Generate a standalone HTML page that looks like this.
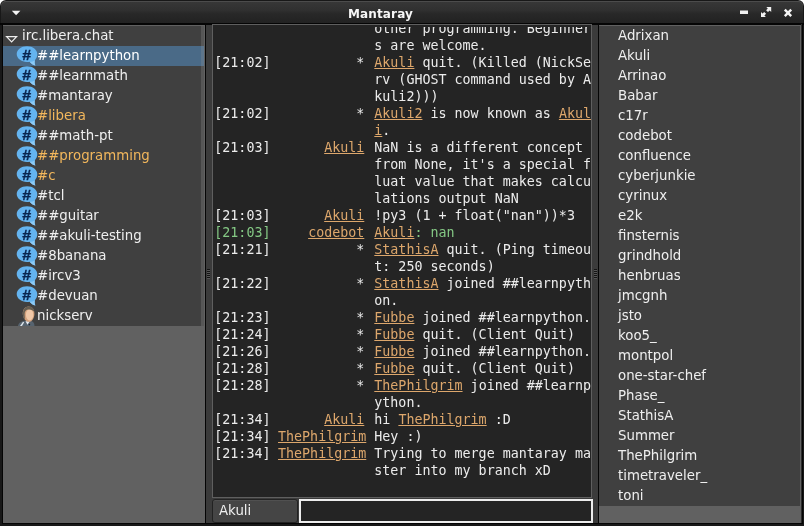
<!DOCTYPE html>
<html><head><meta charset="utf-8"><title>Mantaray</title>
<style>
html,body{margin:0;padding:0;}
body{width:804px;height:526px;overflow:hidden;background:#fff;font-family:"DejaVu Sans","Liberation Sans",sans-serif;position:relative;}
#win{will-change:transform;position:absolute;left:0;top:0;width:804px;height:526px;background:#181818;border-radius:6px 6px 0 0;overflow:hidden;}
#inner{position:absolute;left:3px;top:23px;width:798px;height:500px;background:#3b3b3b;}
.bl{position:absolute;background:#050505;}
#title{position:absolute;left:1px;top:1px;width:802px;height:22px;background:linear-gradient(#383838 0%,#303030 42%,#282828 58%,#222 100%);border-radius:5px 5px 0 0;box-shadow:inset 0 1px 0 #4c4c4c;}
#title .t{position:absolute;left:0;width:759px;letter-spacing:0.14px;top:5px;text-align:center;color:#f6f6f6;font-weight:bold;font-size:12px;line-height:16px;}
#left{position:absolute;left:3px;top:25px;width:202px;height:498px;background:#616161;}
#left .rows{position:absolute;left:0;top:1px;width:201px;background:#404040;}
.row{height:20px;line-height:20px;font-size:13.33px;color:#efefef;white-space:nowrap;position:relative;}
.row.sel{background:#4a6a87;color:#fff;}
.row.hl{color:#f2b75c;}
.row .ic{position:absolute;left:13px;top:0;}
.row .tx{position:absolute;left:34px;top:0;}
.row.top .tx{left:19px;}
#mid{position:absolute;left:212px;top:24px;width:380px;height:474px;background:#242424;box-sizing:border-box;border:1px solid #5f5f5f;overflow:hidden;}
#clip{position:absolute;left:0;top:2px;right:0;bottom:2px;overflow:hidden;}
#chat{position:absolute;left:1.3px;top:-7px;width:376px;font-family:"DejaVu Sans Mono","Liberation Mono",monospace;font-size:13.33px;line-height:17px;color:#ececec;white-space:nowrap;}
#chat .l{height:17px;position:relative;}
#chat .l.g{color:#84c884;}
#chat span{white-space:pre;}
#chat .tm{position:absolute;left:0;}
#chat .sd{position:absolute;left:0;width:152px;text-align:right;box-sizing:border-box;}
#chat .ms{position:absolute;left:160px;}
.n{color:#dda76c;text-decoration:underline;text-decoration-thickness:1px;text-underline-offset:1px;}
#nick{position:absolute;left:212px;top:499px;width:86px;height:24px;background:#454545;color:#efefef;font-size:13.33px;line-height:22px;box-sizing:border-box;border:1px solid #222;border-radius:3px;box-shadow:inset 0 1px 0 #505050;}
#nick span{position:absolute;left:6px;top:0;}
#entry{position:absolute;left:299px;top:499px;width:294px;height:24px;background:#242424;box-sizing:border-box;border:2px solid #ededed;}
#right{position:absolute;left:599px;top:25px;width:202px;height:498px;background:#616161;}
#right .rows{position:absolute;left:0;top:1px;width:201px;background:#404040;}
#right .row .tx{left:19px;}
.grip{position:absolute;}
</style></head><body><div id="win">
<div id="inner"></div>
<div id="title"><div class="t">Mantaray</div>
<svg style="position:absolute;left:-1px;top:-1px" width="804" height="23">
<path d="M11.800 10.800 L20.400 10.800 L16.100 15.200 Z" fill="#f4f4f4"/>
<rect x="740" y="10.500" width="8" height="3.500" fill="#f0f0f0"/>
<g fill="#f2f2f2"><path d="M766.300 7 L771.200 7 L771.200 11.900 L769.700 10.400 L768 12.100 L766.100 10.200 L767.800 8.500 Z"/><path d="M761 17 L761 12.100 L762.500 13.600 L764.200 11.900 L766.100 13.800 L764.400 15.500 L765.900 17 Z"/></g>
<path d="M784.800 9.700 L791.200 16.100 M791.200 9.700 L784.800 16.100" stroke="#f4f4f4" stroke-width="2.400" fill="none"/>
</svg>
</div>
<div class="bl" style="left:0;top:23px;width:804px;height:1px"></div>
<div class="bl" style="left:0;top:24px;width:212px;height:1px"></div>
<div class="bl" style="left:592px;top:24px;width:212px;height:1px"></div>
<div class="bl" style="left:205px;top:24px;width:1px;height:499px"></div>
<div class="bl" style="left:598px;top:24px;width:1px;height:499px"></div>
<div class="bl" style="left:2px;top:23px;width:1px;height:501px"></div>
<div class="bl" style="left:2px;top:523px;width:800px;height:1px"></div>
<div class="bl" style="left:802px;top:23px;width:1px;height:501px"></div>
<div class="bl" style="left:801px;top:24px;width:1px;height:499px;background:#2c2c2c"></div>

<div id="left"><div class="rows">
<div class="row top"><svg style="position:absolute;left:2px;top:0" width="16" height="20"><path d="M1.600 10.600 L11.600 10.600 L6.600 15.800 Z" fill="none" stroke="#efefef" stroke-width="1.200"/></svg><span class="tx">irc.libera.chat</span></div>
<div class="row sel"><svg class="ic" width="24" height="20" viewBox="0 0 24 20"><path d="M11 0.2 C5.2 0.2 0.7 3.7 0.7 8.1 C0.7 12.5 5.2 16 11 16 C11.9 16 12.8 15.9 13.6 15.7 C15.2 17.6 17 19 19.4 19.4 C18.6 18 18.4 16.200 18.900 14.200 C20.4 12.600 21.300 10.600 21.300 8.100 C21.300 3.700 16.800 0.200 11 0.200 Z" fill="#64b4f0"/><path d="M13.600 15.700 C15.200 17.600 17 19 19.400 19.400 C18.600 18 18.400 16.200 18.900 14.200 C17.500 15.200 15.700 15.700 13.600 15.700 Z" fill="#8ccaf6"/><text x="10" y="13.200" transform="scale(1.07,1.03)" text-anchor="middle" font-family="Liberation Sans, DejaVu Sans, sans-serif" font-weight="bold" font-size="15" fill="#0a2650" stroke="#0a2650" stroke-width="0.350">#</text></svg><span class="tx">##learnpython</span></div>
<div class="row "><svg class="ic" width="24" height="20" viewBox="0 0 24 20"><path d="M11 0.2 C5.2 0.2 0.7 3.7 0.7 8.1 C0.7 12.5 5.2 16 11 16 C11.9 16 12.8 15.9 13.6 15.7 C15.2 17.6 17 19 19.4 19.4 C18.6 18 18.4 16.200 18.900 14.200 C20.4 12.600 21.300 10.600 21.300 8.100 C21.300 3.700 16.800 0.200 11 0.200 Z" fill="#64b4f0"/><path d="M13.600 15.700 C15.200 17.600 17 19 19.400 19.400 C18.600 18 18.400 16.200 18.900 14.200 C17.500 15.200 15.700 15.700 13.600 15.700 Z" fill="#8ccaf6"/><text x="10" y="13.200" transform="scale(1.07,1.03)" text-anchor="middle" font-family="Liberation Sans, DejaVu Sans, sans-serif" font-weight="bold" font-size="15" fill="#0a2650" stroke="#0a2650" stroke-width="0.350">#</text></svg><span class="tx">##learnmath</span></div>
<div class="row "><svg class="ic" width="24" height="20" viewBox="0 0 24 20"><path d="M11 0.2 C5.2 0.2 0.7 3.7 0.7 8.1 C0.7 12.5 5.2 16 11 16 C11.9 16 12.8 15.9 13.6 15.7 C15.2 17.6 17 19 19.4 19.4 C18.6 18 18.4 16.200 18.900 14.200 C20.4 12.600 21.300 10.600 21.300 8.100 C21.300 3.700 16.800 0.200 11 0.200 Z" fill="#64b4f0"/><path d="M13.600 15.700 C15.200 17.600 17 19 19.400 19.400 C18.600 18 18.400 16.200 18.900 14.200 C17.500 15.200 15.700 15.700 13.600 15.700 Z" fill="#8ccaf6"/><text x="10" y="13.200" transform="scale(1.07,1.03)" text-anchor="middle" font-family="Liberation Sans, DejaVu Sans, sans-serif" font-weight="bold" font-size="15" fill="#0a2650" stroke="#0a2650" stroke-width="0.350">#</text></svg><span class="tx">#mantaray</span></div>
<div class="row hl"><svg class="ic" width="24" height="20" viewBox="0 0 24 20"><path d="M11 0.2 C5.2 0.2 0.7 3.7 0.7 8.1 C0.7 12.5 5.2 16 11 16 C11.9 16 12.8 15.9 13.6 15.7 C15.2 17.6 17 19 19.4 19.4 C18.6 18 18.4 16.200 18.900 14.200 C20.4 12.600 21.300 10.600 21.300 8.100 C21.300 3.700 16.800 0.200 11 0.200 Z" fill="#64b4f0"/><path d="M13.600 15.700 C15.200 17.600 17 19 19.400 19.400 C18.600 18 18.400 16.200 18.900 14.200 C17.500 15.200 15.700 15.700 13.600 15.700 Z" fill="#8ccaf6"/><text x="10" y="13.200" transform="scale(1.07,1.03)" text-anchor="middle" font-family="Liberation Sans, DejaVu Sans, sans-serif" font-weight="bold" font-size="15" fill="#0a2650" stroke="#0a2650" stroke-width="0.350">#</text></svg><span class="tx">#libera</span></div>
<div class="row "><svg class="ic" width="24" height="20" viewBox="0 0 24 20"><path d="M11 0.2 C5.2 0.2 0.7 3.7 0.7 8.1 C0.7 12.5 5.2 16 11 16 C11.9 16 12.8 15.9 13.6 15.7 C15.2 17.6 17 19 19.4 19.4 C18.6 18 18.4 16.200 18.900 14.200 C20.4 12.600 21.300 10.600 21.300 8.100 C21.300 3.700 16.800 0.200 11 0.200 Z" fill="#64b4f0"/><path d="M13.600 15.700 C15.200 17.600 17 19 19.400 19.400 C18.600 18 18.400 16.200 18.900 14.200 C17.500 15.200 15.700 15.700 13.600 15.700 Z" fill="#8ccaf6"/><text x="10" y="13.200" transform="scale(1.07,1.03)" text-anchor="middle" font-family="Liberation Sans, DejaVu Sans, sans-serif" font-weight="bold" font-size="15" fill="#0a2650" stroke="#0a2650" stroke-width="0.350">#</text></svg><span class="tx">##math-pt</span></div>
<div class="row hl"><svg class="ic" width="24" height="20" viewBox="0 0 24 20"><path d="M11 0.2 C5.2 0.2 0.7 3.7 0.7 8.1 C0.7 12.5 5.2 16 11 16 C11.9 16 12.8 15.9 13.6 15.7 C15.2 17.6 17 19 19.4 19.4 C18.6 18 18.4 16.200 18.900 14.200 C20.4 12.600 21.300 10.600 21.300 8.100 C21.300 3.700 16.800 0.200 11 0.200 Z" fill="#64b4f0"/><path d="M13.600 15.700 C15.200 17.600 17 19 19.400 19.400 C18.600 18 18.400 16.200 18.900 14.200 C17.500 15.200 15.700 15.700 13.600 15.700 Z" fill="#8ccaf6"/><text x="10" y="13.200" transform="scale(1.07,1.03)" text-anchor="middle" font-family="Liberation Sans, DejaVu Sans, sans-serif" font-weight="bold" font-size="15" fill="#0a2650" stroke="#0a2650" stroke-width="0.350">#</text></svg><span class="tx">##programming</span></div>
<div class="row hl"><svg class="ic" width="24" height="20" viewBox="0 0 24 20"><path d="M11 0.2 C5.2 0.2 0.7 3.7 0.7 8.1 C0.7 12.5 5.2 16 11 16 C11.9 16 12.8 15.9 13.6 15.7 C15.2 17.6 17 19 19.4 19.4 C18.6 18 18.4 16.200 18.900 14.200 C20.4 12.600 21.300 10.600 21.300 8.100 C21.300 3.700 16.800 0.200 11 0.200 Z" fill="#64b4f0"/><path d="M13.600 15.700 C15.200 17.600 17 19 19.400 19.400 C18.600 18 18.400 16.200 18.900 14.200 C17.500 15.200 15.700 15.700 13.600 15.700 Z" fill="#8ccaf6"/><text x="10" y="13.200" transform="scale(1.07,1.03)" text-anchor="middle" font-family="Liberation Sans, DejaVu Sans, sans-serif" font-weight="bold" font-size="15" fill="#0a2650" stroke="#0a2650" stroke-width="0.350">#</text></svg><span class="tx">#c</span></div>
<div class="row "><svg class="ic" width="24" height="20" viewBox="0 0 24 20"><path d="M11 0.2 C5.2 0.2 0.7 3.7 0.7 8.1 C0.7 12.5 5.2 16 11 16 C11.9 16 12.8 15.9 13.6 15.7 C15.2 17.6 17 19 19.4 19.4 C18.6 18 18.4 16.200 18.900 14.200 C20.4 12.600 21.300 10.600 21.300 8.100 C21.300 3.700 16.800 0.200 11 0.200 Z" fill="#64b4f0"/><path d="M13.600 15.700 C15.200 17.600 17 19 19.400 19.400 C18.600 18 18.400 16.200 18.900 14.200 C17.500 15.200 15.700 15.700 13.600 15.700 Z" fill="#8ccaf6"/><text x="10" y="13.200" transform="scale(1.07,1.03)" text-anchor="middle" font-family="Liberation Sans, DejaVu Sans, sans-serif" font-weight="bold" font-size="15" fill="#0a2650" stroke="#0a2650" stroke-width="0.350">#</text></svg><span class="tx">#tcl</span></div>
<div class="row "><svg class="ic" width="24" height="20" viewBox="0 0 24 20"><path d="M11 0.2 C5.2 0.2 0.7 3.7 0.7 8.1 C0.7 12.5 5.2 16 11 16 C11.9 16 12.8 15.9 13.6 15.7 C15.2 17.6 17 19 19.4 19.4 C18.6 18 18.4 16.200 18.900 14.200 C20.4 12.600 21.300 10.600 21.300 8.100 C21.300 3.700 16.800 0.200 11 0.200 Z" fill="#64b4f0"/><path d="M13.600 15.700 C15.200 17.600 17 19 19.400 19.400 C18.600 18 18.400 16.200 18.900 14.200 C17.500 15.200 15.700 15.700 13.600 15.700 Z" fill="#8ccaf6"/><text x="10" y="13.200" transform="scale(1.07,1.03)" text-anchor="middle" font-family="Liberation Sans, DejaVu Sans, sans-serif" font-weight="bold" font-size="15" fill="#0a2650" stroke="#0a2650" stroke-width="0.350">#</text></svg><span class="tx">##guitar</span></div>
<div class="row "><svg class="ic" width="24" height="20" viewBox="0 0 24 20"><path d="M11 0.2 C5.2 0.2 0.7 3.7 0.7 8.1 C0.7 12.5 5.2 16 11 16 C11.9 16 12.8 15.9 13.6 15.7 C15.2 17.6 17 19 19.4 19.4 C18.6 18 18.4 16.200 18.900 14.200 C20.4 12.600 21.300 10.600 21.300 8.100 C21.300 3.700 16.800 0.200 11 0.200 Z" fill="#64b4f0"/><path d="M13.600 15.700 C15.200 17.600 17 19 19.400 19.400 C18.600 18 18.400 16.200 18.900 14.200 C17.500 15.200 15.700 15.700 13.600 15.700 Z" fill="#8ccaf6"/><text x="10" y="13.200" transform="scale(1.07,1.03)" text-anchor="middle" font-family="Liberation Sans, DejaVu Sans, sans-serif" font-weight="bold" font-size="15" fill="#0a2650" stroke="#0a2650" stroke-width="0.350">#</text></svg><span class="tx">##akuli-testing</span></div>
<div class="row "><svg class="ic" width="24" height="20" viewBox="0 0 24 20"><path d="M11 0.2 C5.2 0.2 0.7 3.7 0.7 8.1 C0.7 12.5 5.2 16 11 16 C11.9 16 12.8 15.9 13.6 15.7 C15.2 17.6 17 19 19.4 19.4 C18.6 18 18.4 16.200 18.900 14.200 C20.4 12.600 21.300 10.600 21.300 8.100 C21.300 3.700 16.800 0.200 11 0.200 Z" fill="#64b4f0"/><path d="M13.600 15.700 C15.200 17.600 17 19 19.400 19.400 C18.600 18 18.400 16.200 18.900 14.200 C17.500 15.200 15.700 15.700 13.600 15.700 Z" fill="#8ccaf6"/><text x="10" y="13.200" transform="scale(1.07,1.03)" text-anchor="middle" font-family="Liberation Sans, DejaVu Sans, sans-serif" font-weight="bold" font-size="15" fill="#0a2650" stroke="#0a2650" stroke-width="0.350">#</text></svg><span class="tx">#8banana</span></div>
<div class="row "><svg class="ic" width="24" height="20" viewBox="0 0 24 20"><path d="M11 0.2 C5.2 0.2 0.7 3.7 0.7 8.1 C0.7 12.5 5.2 16 11 16 C11.9 16 12.8 15.9 13.6 15.7 C15.2 17.6 17 19 19.4 19.4 C18.6 18 18.4 16.200 18.900 14.200 C20.4 12.600 21.300 10.600 21.300 8.100 C21.300 3.700 16.800 0.200 11 0.200 Z" fill="#64b4f0"/><path d="M13.600 15.700 C15.200 17.600 17 19 19.400 19.400 C18.600 18 18.400 16.200 18.900 14.200 C17.500 15.200 15.700 15.700 13.600 15.700 Z" fill="#8ccaf6"/><text x="10" y="13.200" transform="scale(1.07,1.03)" text-anchor="middle" font-family="Liberation Sans, DejaVu Sans, sans-serif" font-weight="bold" font-size="15" fill="#0a2650" stroke="#0a2650" stroke-width="0.350">#</text></svg><span class="tx">#ircv3</span></div>
<div class="row "><svg class="ic" width="24" height="20" viewBox="0 0 24 20"><path d="M11 0.2 C5.2 0.2 0.7 3.7 0.7 8.1 C0.7 12.5 5.2 16 11 16 C11.9 16 12.8 15.9 13.6 15.7 C15.2 17.6 17 19 19.4 19.4 C18.6 18 18.4 16.200 18.900 14.200 C20.4 12.600 21.300 10.600 21.300 8.100 C21.300 3.700 16.800 0.200 11 0.200 Z" fill="#64b4f0"/><path d="M13.600 15.700 C15.200 17.600 17 19 19.400 19.400 C18.600 18 18.400 16.200 18.900 14.200 C17.500 15.200 15.700 15.700 13.600 15.700 Z" fill="#8ccaf6"/><text x="10" y="13.200" transform="scale(1.07,1.03)" text-anchor="middle" font-family="Liberation Sans, DejaVu Sans, sans-serif" font-weight="bold" font-size="15" fill="#0a2650" stroke="#0a2650" stroke-width="0.350">#</text></svg><span class="tx">#devuan</span></div>
<div class="row"><svg class="ic" width="24" height="20" viewBox="0 0 24 20"><path d="M2 20 C2.500 16.500 6 15.200 8.500 14.800 L15 14.800 C17 15.400 18.500 17 18.500 20 Z" fill="#56636f"/><path d="M4 20 L7 15.700 L8.200 16.200 L6 20 Z" fill="#dfe6ec"/><path d="M9.500 15.300 L11.500 18.800 L13.800 15.300 Z" fill="#e8ecf2"/><circle cx="13.400" cy="18.600" r="0.800" fill="#1c2430"/><path d="M12.600 0.600 C16.400 0.600 18.500 3.600 18.400 8 C18.300 12 16 15.800 13 15.800 C9.800 15.800 7 12.400 6.800 8 C6.600 3.600 9 0.600 12.600 0.600 Z" fill="#d3a17c"/><ellipse cx="13.600" cy="8.800" rx="3.700" ry="5.600" fill="#f0c8a8"/><path d="M7 9.500 C6.200 3.500 9.300 0.300 13 0.400 C16.300 0.500 18.300 2.800 18.400 6.200 C17 3.900 14.500 3.200 12 3.600 C9.700 4 8.600 5.600 8.600 8.500 L8.900 13.400 C7.700 12.400 7.200 11 7 9.500 Z" fill="#655e52"/></svg><span class="tx">nickserv</span></div>
</div><div style="position:absolute;left:198px;top:1px;width:3px;height:300px;background:rgba(150,150,150,0.26)"></div></div>
<svg class="grip" style="left:207px;top:269px" width="3" height="10"><rect x="0" y="0" width="3" height="1" fill="#141414"/><rect x="0" y="1" width="3" height="1" fill="#565656"/><rect x="0" y="2" width="3" height="1" fill="#141414"/><rect x="0" y="3" width="3" height="1" fill="#565656"/><rect x="0" y="4" width="3" height="1" fill="#141414"/><rect x="0" y="5" width="3" height="1" fill="#565656"/><rect x="0" y="6" width="3" height="1" fill="#141414"/><rect x="0" y="7" width="3" height="1" fill="#565656"/><rect x="0" y="8" width="3" height="1" fill="#141414"/><rect x="0" y="9" width="3" height="1" fill="#565656"/></svg>
<svg class="grip" style="left:594px;top:269px" width="3" height="10"><rect x="0" y="0" width="3" height="1" fill="#141414"/><rect x="0" y="1" width="3" height="1" fill="#565656"/><rect x="0" y="2" width="3" height="1" fill="#141414"/><rect x="0" y="3" width="3" height="1" fill="#565656"/><rect x="0" y="4" width="3" height="1" fill="#141414"/><rect x="0" y="5" width="3" height="1" fill="#565656"/><rect x="0" y="6" width="3" height="1" fill="#141414"/><rect x="0" y="7" width="3" height="1" fill="#565656"/><rect x="0" y="8" width="3" height="1" fill="#141414"/><rect x="0" y="9" width="3" height="1" fill="#565656"/></svg>
<div id="mid"><div id="clip"><div id="chat">
<div class="l "><span class="tm"></span><span class="sd" style="padding-right:0.0px"></span><span class="ms">other programming. Beginner</span></div>
<div class="l "><span class="tm"></span><span class="sd" style="padding-right:0.0px"></span><span class="ms">s are welcome.</span></div>
<div class="l "><span class="tm">[21:02]</span><span class="sd" style="padding-right:2.0px">*</span><span class="ms"><span class="n">Akuli</span> quit. (Killed (NickSe</span></div>
<div class="l "><span class="tm"></span><span class="sd" style="padding-right:0.0px"></span><span class="ms">rv (GHOST command used by A</span></div>
<div class="l "><span class="tm"></span><span class="sd" style="padding-right:0.0px"></span><span class="ms">kuli2)))</span></div>
<div class="l "><span class="tm">[21:02]</span><span class="sd" style="padding-right:2.0px">*</span><span class="ms"><span class="n">Akuli2</span> is now known as <span class="n">Akul</span></span></div>
<div class="l "><span class="tm"></span><span class="sd" style="padding-right:0.0px"></span><span class="ms"><span class="n">i</span>.</span></div>
<div class="l "><span class="tm">[21:03]</span><span class="sd" style="padding-right:2.0px"><span class="n">Akuli</span></span><span class="ms">NaN is a different concept</span></div>
<div class="l "><span class="tm"></span><span class="sd" style="padding-right:0.0px"></span><span class="ms">from None, it's a special f</span></div>
<div class="l "><span class="tm"></span><span class="sd" style="padding-right:0.0px"></span><span class="ms">luat value that makes calcu</span></div>
<div class="l "><span class="tm"></span><span class="sd" style="padding-right:0.0px"></span><span class="ms">lations output NaN</span></div>
<div class="l "><span class="tm">[21:03]</span><span class="sd" style="padding-right:2.0px"><span class="n">Akuli</span></span><span class="ms">!py3 (1 + float("nan"))*3</span></div>
<div class="l g"><span class="tm">[21:03]</span><span class="sd" style="padding-right:2.0px"><span class="n">codebot</span></span><span class="ms"><span class="n">Akuli</span>: nan</span></div>
<div class="l "><span class="tm">[21:21]</span><span class="sd" style="padding-right:2.0px">*</span><span class="ms"><span class="n">StathisA</span> quit. (Ping timeou</span></div>
<div class="l "><span class="tm"></span><span class="sd" style="padding-right:0.0px"></span><span class="ms">t: 250 seconds)</span></div>
<div class="l "><span class="tm">[21:22]</span><span class="sd" style="padding-right:2.0px">*</span><span class="ms"><span class="n">StathisA</span> joined ##learnpyth</span></div>
<div class="l "><span class="tm"></span><span class="sd" style="padding-right:0.0px"></span><span class="ms">on.</span></div>
<div class="l "><span class="tm">[21:23]</span><span class="sd" style="padding-right:2.0px">*</span><span class="ms"><span class="n">Fubbe</span> joined ##learnpython.</span></div>
<div class="l "><span class="tm">[21:24]</span><span class="sd" style="padding-right:2.0px">*</span><span class="ms"><span class="n">Fubbe</span> quit. (Client Quit)</span></div>
<div class="l "><span class="tm">[21:26]</span><span class="sd" style="padding-right:2.0px">*</span><span class="ms"><span class="n">Fubbe</span> joined ##learnpython.</span></div>
<div class="l "><span class="tm">[21:28]</span><span class="sd" style="padding-right:2.0px">*</span><span class="ms"><span class="n">Fubbe</span> quit. (Client Quit)</span></div>
<div class="l "><span class="tm">[21:28]</span><span class="sd" style="padding-right:2.0px">*</span><span class="ms"><span class="n">ThePhilgrim</span> joined ##learnp</span></div>
<div class="l "><span class="tm"></span><span class="sd" style="padding-right:0.0px"></span><span class="ms">ython.</span></div>
<div class="l "><span class="tm">[21:34]</span><span class="sd" style="padding-right:2.0px"><span class="n">Akuli</span></span><span class="ms">hi <span class="n">ThePhilgrim</span> :D</span></div>
<div class="l "><span class="tm">[21:34]</span><span class="sd" style="padding-right:0.0px"><span class="n">ThePhilgrim</span></span><span class="ms">Hey :)</span></div>
<div class="l "><span class="tm">[21:34]</span><span class="sd" style="padding-right:0.0px"><span class="n">ThePhilgrim</span></span><span class="ms">Trying to merge mantaray ma</span></div>
<div class="l "><span class="tm"></span><span class="sd" style="padding-right:0.0px"></span><span class="ms">ster into my branch xD</span></div>
</div></div></div>
<div id="nick"><span>Akuli</span></div><div id="entry"></div>
<div id="right"><div class="rows">
<div class="row"><span class="tx">Adrixan</span></div>
<div class="row"><span class="tx">Akuli</span></div>
<div class="row"><span class="tx">Arrinao</span></div>
<div class="row"><span class="tx">Babar</span></div>
<div class="row"><span class="tx">c17r</span></div>
<div class="row"><span class="tx">codebot</span></div>
<div class="row"><span class="tx">confluence</span></div>
<div class="row"><span class="tx">cyberjunkie</span></div>
<div class="row"><span class="tx">cyrinux</span></div>
<div class="row"><span class="tx">e2k</span></div>
<div class="row"><span class="tx">finsternis</span></div>
<div class="row"><span class="tx">grindhold</span></div>
<div class="row"><span class="tx">henbruas</span></div>
<div class="row"><span class="tx">jmcgnh</span></div>
<div class="row"><span class="tx">jsto</span></div>
<div class="row"><span class="tx">koo5_</span></div>
<div class="row"><span class="tx">montpol</span></div>
<div class="row"><span class="tx">one-star-chef</span></div>
<div class="row"><span class="tx">Phase_</span></div>
<div class="row"><span class="tx">StathisA</span></div>
<div class="row"><span class="tx">Summer</span></div>
<div class="row"><span class="tx">ThePhilgrim</span></div>
<div class="row"><span class="tx">timetraveler_</span></div>
<div class="row"><span class="tx">toni</span></div>
</div></div>
</div></body></html>
